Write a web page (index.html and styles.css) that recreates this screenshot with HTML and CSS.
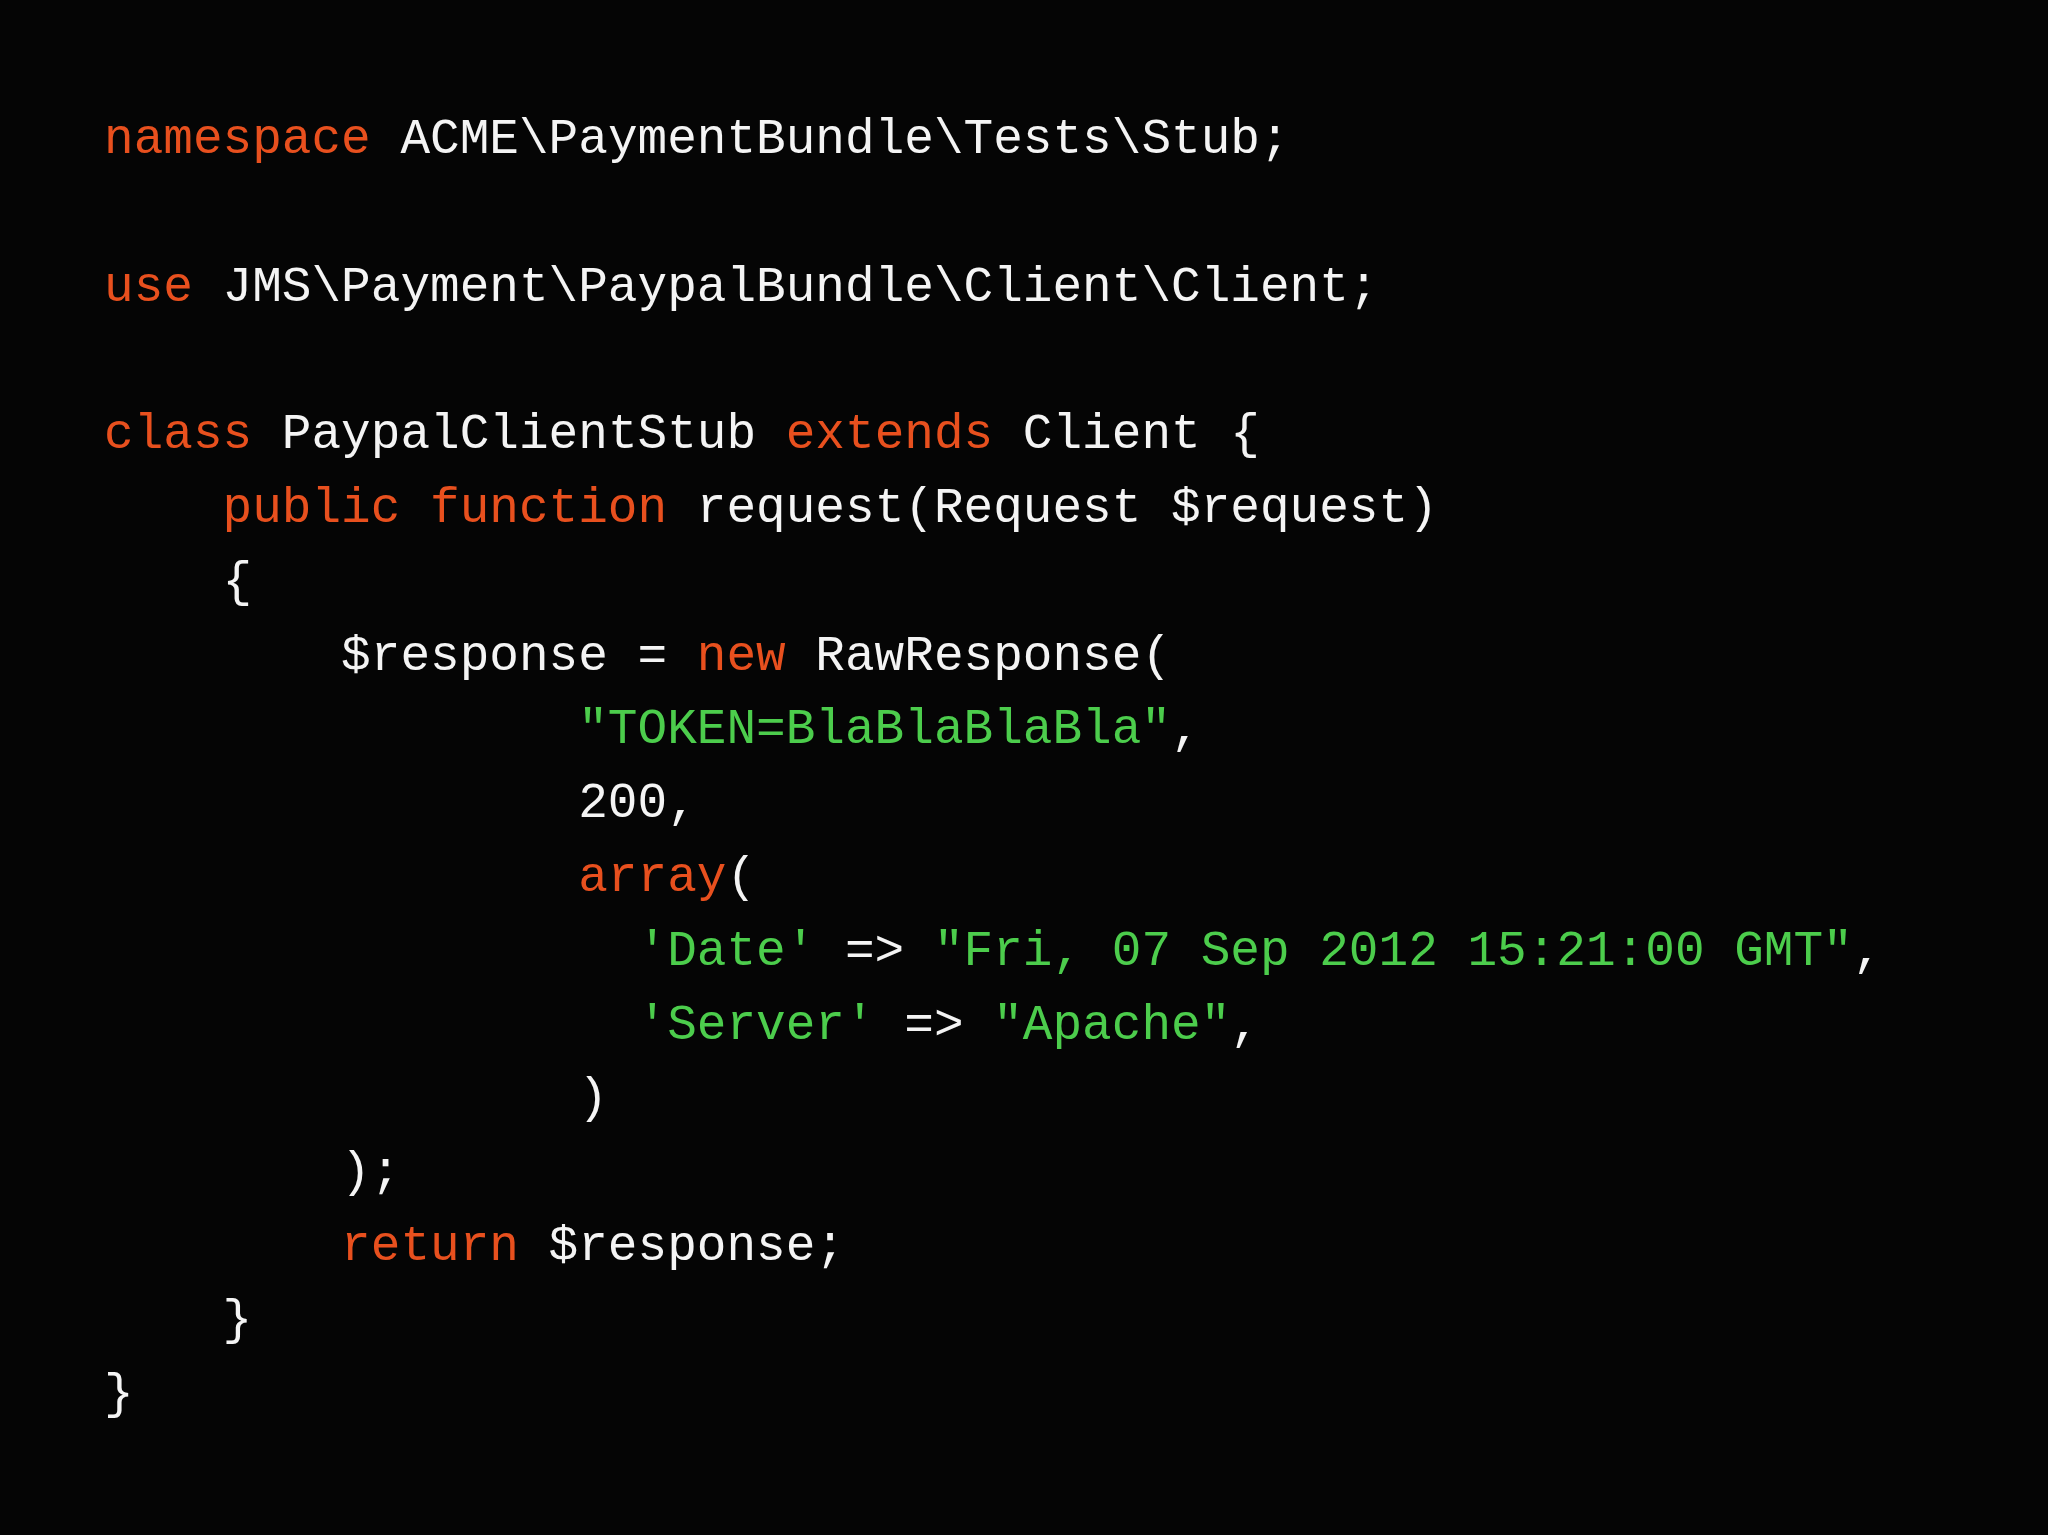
FILE: index.html
```html
<!DOCTYPE html>
<html lang="en">
<head>
    <meta charset="UTF-8">
    <title>PaypalClientStub</title>
    <link rel="stylesheet" href="styles.css">
</head>
<body>
    <div class="slide">
        <div class="code">
            <div class="line"><span class="kw">namespace</span> <span>ACME\PaymentBundle\Tests\Stub;</span></div>
            <div class="line blank"></div>
            <div class="line"><span class="kw">use</span> <span>JMS\Payment\PaypalBundle\Client\Client;</span></div>
            <div class="line blank"></div>
            <div class="line"><span class="kw">class</span> <span>PaypalClientStub</span> <span class="kw">extends</span> <span>Client {</span></div>
            <div class="line in-1"><span class="kw">public</span> <span class="kw">function</span> <span>request(Request $request)</span></div>
            <div class="line in-1"><span>{</span></div>
            <div class="line in-2"><span>$response =</span> <span class="kw">new</span> <span>RawResponse(</span></div>
            <div class="line in-4"><span class="str">"TOKEN=BlaBlaBlaBla"</span><span>,</span></div>
            <div class="line in-4"><span>200,</span></div>
            <div class="line in-4"><span class="kw">array</span><span>(</span></div>
            <div class="line in-5"><span class="str">'Date'</span> <span>=&gt;</span> <span class="str">"Fri, 07 Sep 2012 15:21:00 GMT"</span><span>,</span></div>
            <div class="line in-5"><span class="str">'Server'</span> <span>=&gt;</span> <span class="str">"Apache"</span><span>,</span></div>
            <div class="line in-4"><span>)</span></div>
            <div class="line in-2"><span>);</span></div>
            <div class="line in-2"><span class="kw">return</span> <span>$response;</span></div>
            <div class="line in-1"><span>}</span></div>
            <div class="line"><span>}</span></div>
        </div>
    </div>
</body>
</html>
```

FILE: styles.css
```css
* {
    margin: 0;
    padding: 0;
    box-sizing: border-box;
}

html, body {
    background: #050505;
}

body {
    width: 2048px;
    height: 1535px;
    overflow: hidden;
}

.slide {
    padding: 104px 0 0 104px;
}

.code {
    font-family: 'Liberation Mono', 'Courier New', monospace;
    font-size: 49.4px;
    color: #f4f4f4;
}

.line {
    height: 73.8px;
    line-height: 73.8px;
    white-space: pre;
}

/* indent is counted in characters, like the source */
.in-1 { padding-left: 4ch; }
.in-2 { padding-left: 8ch; }
.in-4 { padding-left: 16ch; }
.in-5 { padding-left: 18ch; }

.kw {
    color: #e8501e;
}

.str {
    color: #4ccd4c;
}
```
